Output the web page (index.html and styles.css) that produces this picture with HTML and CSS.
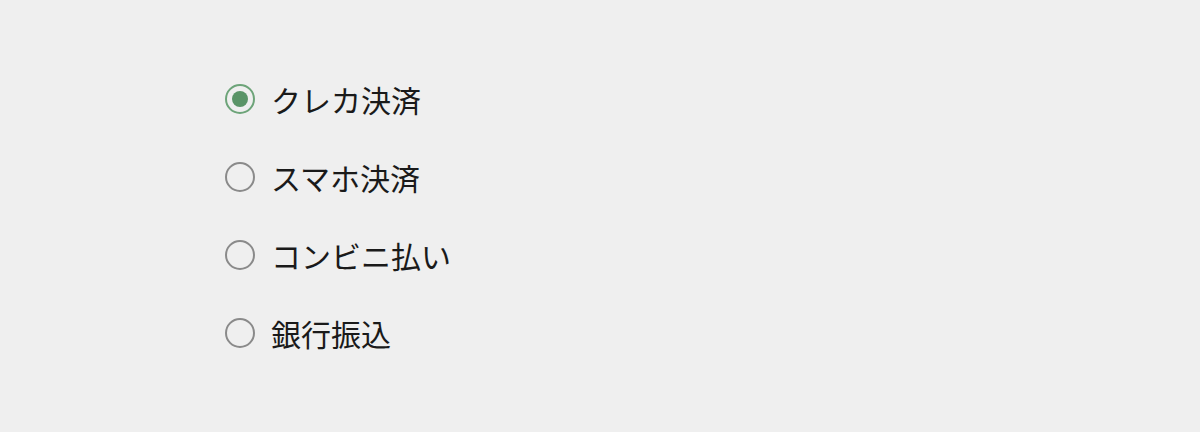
FILE: index.html
```html
<!DOCTYPE html>
<html lang="ja">
<head>
<meta charset="utf-8">
<link rel="stylesheet" href="styles.css">
</head>
<body>
<div class="page">
  <div class="radio-group">
    <label class="option"><span class="radio checked"></span><span class="label">クレカ決済</span></label>
    <label class="option"><span class="radio"></span><span class="label">スマホ決済</span></label>
    <label class="option"><span class="radio"></span><span class="label">コンビニ払い</span></label>
    <label class="option"><span class="radio"></span><span class="label">銀行振込</span></label>
  </div>
</div>
</body>
</html>
```
FILE: styles.css
```css
html, body {
  margin: 0;
  padding: 0;
  background: #efefef;
}
.page {
  width: 1200px;
  height: 432px;
  box-sizing: border-box;
  padding: 84px 0 0 225px;
  font-family: "Noto Sans CJK JP", "Noto Sans", sans-serif;
  color: #1a1a1a;
}
.radio-group {
  display: flex;
  flex-direction: column;
  gap: 48px;
}
.option {
  display: flex;
  align-items: center;
  height: 30px;
  gap: 16px;
}
.radio {
  box-sizing: border-box;
  width: 30px;
  height: 30px;
  border-radius: 50%;
  border: 2px solid #8a8a8a;
  display: flex;
  align-items: center;
  justify-content: center;
  flex: none;
}
.radio.checked {
  border-color: #6da479;
}
.radio.checked::after {
  content: "";
  width: 16px;
  height: 16px;
  border-radius: 50%;
  background: #5a9467;
}
.label {
  font-size: 30px;
  line-height: 30px;
}
```
